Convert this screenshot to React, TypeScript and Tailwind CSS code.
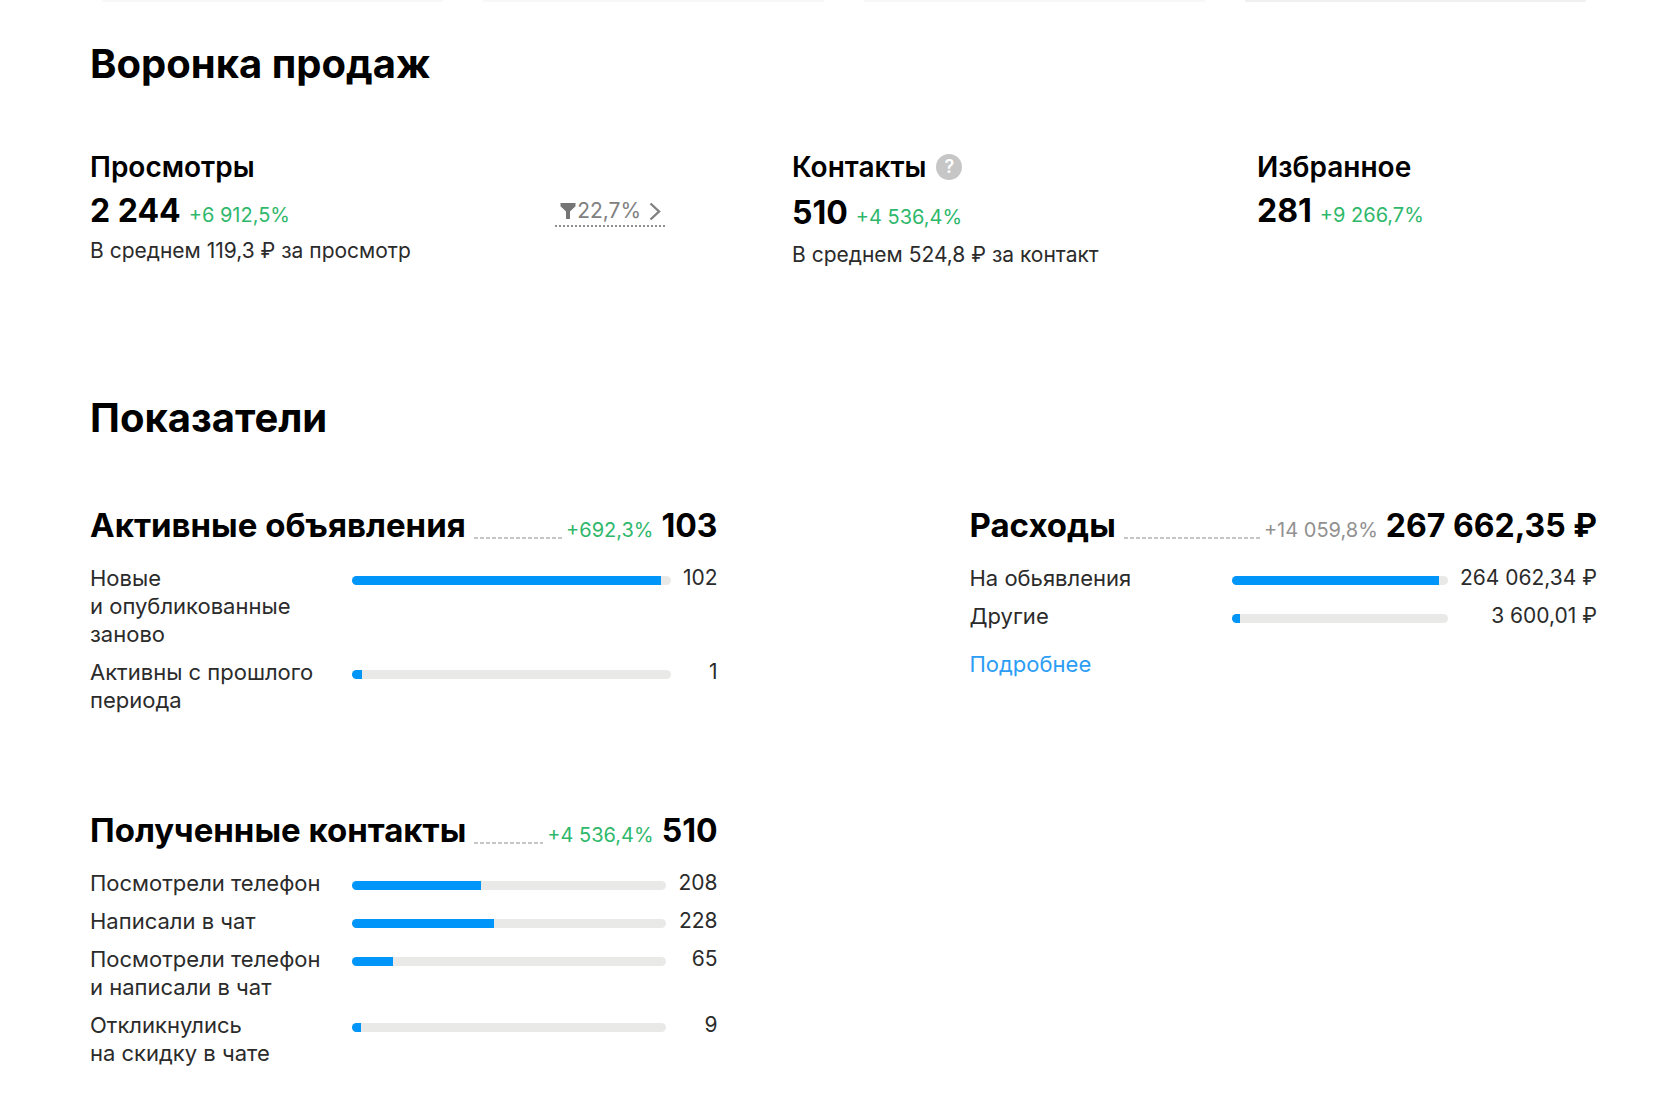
import { clsx } from "clsx";

type Row = { label: string; value: string; percent: number };

type IndicatorProps = {
    title: string;
    delta: string;
    total: string;
    rows: Row[];
    muted?: boolean;
};

const activeRows: Row[] = [
    { label: "Новые\nи опубликованные\nзаново", value: "102", percent: 97 },
    { label: "Активны с прошлого\nпериода", value: "1", percent: 3 },
];

const expenseRows: Row[] = [
    { label: "На обьявления", value: "264 062,34 ₽", percent: 96 },
    { label: "Другие", value: "3 600,01 ₽", percent: 4 },
];

const contactRows: Row[] = [
    { label: "Посмотрели телефон", value: "208", percent: 41 },
    { label: "Написали в чат", value: "228", percent: 45 },
    { label: "Посмотрели телефон\nи написали в чат", value: "65", percent: 13 },
    { label: "Откликнулись\nна скидку в чате", value: "9", percent: 3 },
];

function Stat({ value, delta, note, loose }: { value: string; delta: string; note?: string; loose?: boolean }) {
    return (
        <div className={clsx("flex flex-col", loose ? "mt-[10px] gap-[5px]" : "mt-2 gap-[3px]")}>
            <p className="flex items-baseline gap-2 leading-9">
                <span className="text-[32px] font-bold">{value}</span>
                <span className="text-[20px] text-[#2fb86b]">{delta}</span>
            </p>
            {note && <p className="text-[21px] leading-[29px] text-[#2b2b2b]">{note}</p>}
        </div>
    );
}

function Indicator({ title, delta, total, rows, muted }: IndicatorProps) {
    return (
        <section>
            <div className="flex items-baseline whitespace-nowrap leading-10">
                <h3 className="text-[33px] font-bold">{title}</h3>
                <span className="mb-[7px] ml-2 mr-1 h-0.5 min-w-0 flex-1 self-end bg-[repeating-linear-gradient(90deg,#c6c6c6_0_4px,transparent_4px_6px)]" />
                <span className={clsx("text-[20px] leading-none", muted ? "text-[#919191]" : "text-[#2fb86b]")}>{delta}</span>
                <span className="ml-2 text-[32px] font-bold">{total}</span>
            </div>
            <div className="mt-[18px] grid grid-cols-[262px_1fr_auto] gap-y-[10px] text-[22px] leading-7 text-[#2b2b2b]">
                {rows.map((row) => (
                    <div key={row.label} className="contents">
                        <span className="whitespace-pre-line">{row.label}</span>
                        <div className="mt-3 h-[9px] overflow-hidden rounded-full bg-[#e9e9e8]">
                            <div className="h-full bg-[#0095f8]" style={{ width: `${row.percent}%` }} />
                        </div>
                        <span className="pl-3 text-right text-[21px]">{row.value}</span>
                    </div>
                ))}
            </div>
        </section>
    );
}

export default function App() {
    return (
        <div className="bg-white font-['Inter','Noto_Sans',sans-serif] text-black">
            <div className="grid grid-cols-4 gap-x-10 pl-[102px] pr-[94px]">
                <div className="h-0.5 bg-[#f8f8f8]" />
                <div className="h-0.5 bg-[#f8f8f8]" />
                <div className="h-0.5 bg-[#f8f8f8]" />
                <div className="h-0.5 bg-[#f0f0f0]" />
            </div>

            <main className="pb-12 pl-[90px] pr-[83px]">
                <h2 className="pt-9 text-[40px] font-bold leading-[52px]">Воронка продаж</h2>

                <div className="mt-[59px] grid grid-cols-[702px_465px_1fr]">
                    <section className="flex justify-between pr-[127px]">
                        <div>
                            <h3 className="text-[28px] font-semibold leading-9">Просмотры</h3>
                            <Stat value="2 244" delta="+6 912,5%" note="В среднем 119,3 ₽ за просмотр" />
                        </div>
                        <button type="button" className="mt-[47px] flex h-[31px] items-center border-b-2 border-dotted border-[#8f8f8f] px-1 text-[21px] text-[#808080]">
                            <svg viewBox="0 0 18 18" className="h-[18px] w-[18px]" fill="#757575" aria-hidden="true">
                                <path d="M1.5 1h15v3.2L11 9.5V17H7V9.5L1.5 4.2Z" />
                            </svg>
                            <span>22,7%</span>
                            <svg viewBox="0 0 12 20" className="ml-2 h-5 w-3" fill="none" stroke="#808080" strokeWidth="2.4" aria-hidden="true">
                                <path d="m1.5 2.5 8.5 8-8.5 8" />
                            </svg>
                        </button>
                    </section>

                    <section>
                        <h3 className="flex items-center gap-2.5 text-[28px] font-semibold leading-9">
                            Контакты
                            <button type="button" aria-label="Подсказка" className="flex h-[26px] w-[26px] items-center justify-center rounded-full bg-[#c6c6c6] text-[18px] font-semibold leading-none text-white">
                                ?
                            </button>
                        </h3>
                        <Stat value="510" delta="+4 536,4%" note="В среднем 524,8 ₽ за контакт" loose />
                    </section>

                    <section>
                        <h3 className="text-[28px] font-semibold leading-9">Избранное</h3>
                        <Stat value="281" delta="+9 266,7%" />
                    </section>
                </div>

                <h2 className="mt-[123px] text-[40px] font-bold leading-[52px]">Показатели</h2>

                <div className="mt-[61px] grid grid-cols-2 gap-x-[252px] gap-y-24">
                    <Indicator title="Активные объявления" delta="+692,3%" total="103" rows={activeRows} />
                    <div>
                        <Indicator title="Расходы" delta="+14 059,8%" total="267 662,35 ₽" rows={expenseRows} muted />
                        <a href="#expenses" className="mt-5 inline-block text-[22px] leading-7 text-[#2b9df4]">
                            Подробнее
                        </a>
                    </div>
                    <Indicator title="Полученные контакты" delta="+4 536,4%" total="510" rows={contactRows} />
                </div>
            </main>
        </div>
    );
}
